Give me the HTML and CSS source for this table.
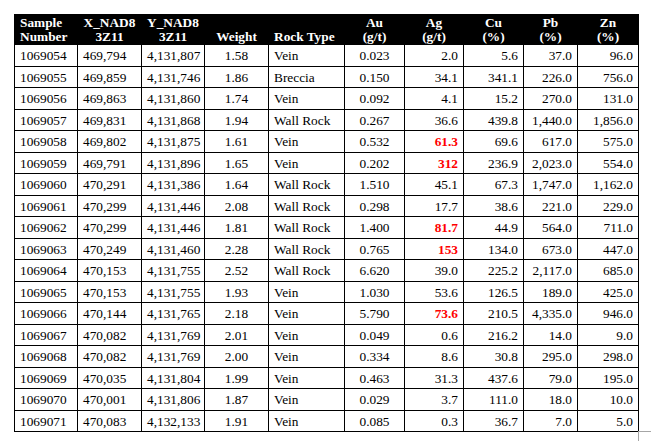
FILE: index.html
```html
<!DOCTYPE html>
<html>
<head>
<meta charset="utf-8">
<link rel="stylesheet" href="styles.css">
</head>
<body>
<div class="page">
<table class="assay">
<colgroup>
<col class="c1"><col class="c2"><col class="c3"><col class="c4"><col class="c5"><col class="c6"><col class="c7"><col class="c8"><col class="c9"><col class="c10">
</colgroup>
<thead>
<tr>
<th class="l">Sample<br>Number</th>
<th>X_NAD8<br>3Z11</th>
<th>Y_NAD8<br>3Z11</th>
<th class="b">Weight</th>
<th class="l b">Rock Type</th>
<th>Au<br>(g/t)</th>
<th>Ag<br>(g/t)</th>
<th>Cu<br>(%)</th>
<th>Pb<br>(%)</th>
<th>Zn<br>(%)</th>
</tr>
</thead>
<tbody>
<tr><td>1069054</td><td>469,794</td><td>4,131,807</td><td class="c">1.58</td><td>Vein</td><td class="c">0.023</td><td class="r">2.0</td><td class="r">5.6</td><td class="r">37.0</td><td class="r">96.0</td></tr>
<tr><td>1069055</td><td>469,859</td><td>4,131,746</td><td class="c">1.86</td><td>Breccia</td><td class="c">0.150</td><td class="r">34.1</td><td class="r">341.1</td><td class="r">226.0</td><td class="r">756.0</td></tr>
<tr><td>1069056</td><td>469,863</td><td>4,131,860</td><td class="c">1.74</td><td>Vein</td><td class="c">0.092</td><td class="r">4.1</td><td class="r">15.2</td><td class="r">270.0</td><td class="r">131.0</td></tr>
<tr><td>1069057</td><td>469,831</td><td>4,131,868</td><td class="c">1.94</td><td>Wall Rock</td><td class="c">0.267</td><td class="r">36.6</td><td class="r">439.8</td><td class="r">1,440.0</td><td class="r">1,856.0</td></tr>
<tr><td>1069058</td><td>469,802</td><td>4,131,875</td><td class="c">1.61</td><td>Vein</td><td class="c">0.532</td><td class="r hi">61.3</td><td class="r">69.6</td><td class="r">617.0</td><td class="r">575.0</td></tr>
<tr><td>1069059</td><td>469,791</td><td>4,131,896</td><td class="c">1.65</td><td>Vein</td><td class="c">0.202</td><td class="r hi">312</td><td class="r">236.9</td><td class="r">2,023.0</td><td class="r">554.0</td></tr>
<tr><td>1069060</td><td>470,291</td><td>4,131,386</td><td class="c">1.64</td><td>Wall Rock</td><td class="c">1.510</td><td class="r">45.1</td><td class="r">67.3</td><td class="r">1,747.0</td><td class="r">1,162.0</td></tr>
<tr><td>1069061</td><td>470,299</td><td>4,131,446</td><td class="c">2.08</td><td>Wall Rock</td><td class="c">0.298</td><td class="r">17.7</td><td class="r">38.6</td><td class="r">221.0</td><td class="r">229.0</td></tr>
<tr><td>1069062</td><td>470,299</td><td>4,131,446</td><td class="c">1.81</td><td>Wall Rock</td><td class="c">1.400</td><td class="r hi">81.7</td><td class="r">44.9</td><td class="r">564.0</td><td class="r">711.0</td></tr>
<tr><td>1069063</td><td>470,249</td><td>4,131,460</td><td class="c">2.28</td><td>Wall Rock</td><td class="c">0.765</td><td class="r hi">153</td><td class="r">134.0</td><td class="r">673.0</td><td class="r">447.0</td></tr>
<tr><td>1069064</td><td>470,153</td><td>4,131,755</td><td class="c">2.52</td><td>Wall Rock</td><td class="c">6.620</td><td class="r">39.0</td><td class="r">225.2</td><td class="r">2,117.0</td><td class="r">685.0</td></tr>
<tr><td>1069065</td><td>470,153</td><td>4,131,755</td><td class="c">1.93</td><td>Vein</td><td class="c">1.030</td><td class="r">53.6</td><td class="r">126.5</td><td class="r">189.0</td><td class="r">425.0</td></tr>
<tr><td>1069066</td><td>470,144</td><td>4,131,765</td><td class="c">2.18</td><td>Vein</td><td class="c">5.790</td><td class="r hi">73.6</td><td class="r">210.5</td><td class="r">4,335.0</td><td class="r">946.0</td></tr>
<tr><td>1069067</td><td>470,082</td><td>4,131,769</td><td class="c">2.01</td><td>Vein</td><td class="c">0.049</td><td class="r">0.6</td><td class="r">216.2</td><td class="r">14.0</td><td class="r">9.0</td></tr>
<tr><td>1069068</td><td>470,082</td><td>4,131,769</td><td class="c">2.00</td><td>Vein</td><td class="c">0.334</td><td class="r">8.6</td><td class="r">30.8</td><td class="r">295.0</td><td class="r">298.0</td></tr>
<tr><td>1069069</td><td>470,035</td><td>4,131,804</td><td class="c">1.99</td><td>Vein</td><td class="c">0.463</td><td class="r">31.3</td><td class="r">437.6</td><td class="r">79.0</td><td class="r">195.0</td></tr>
<tr><td>1069070</td><td>470,001</td><td>4,131,806</td><td class="c">1.87</td><td>Vein</td><td class="c">0.029</td><td class="r">3.7</td><td class="r">111.0</td><td class="r">18.0</td><td class="r">10.0</td></tr>
<tr><td>1069071</td><td>470,083</td><td>4,132,133</td><td class="c">1.91</td><td>Vein</td><td class="c">0.085</td><td class="r">0.3</td><td class="r">36.7</td><td class="r">7.0</td><td class="r">5.0</td></tr>
</tbody>
</table>
<div class="mark"></div>
</div>
</body>
</html>
```
FILE: styles.css
```css
html, body {
  margin: 0;
  padding: 0;
  background: #ffffff;
}
.page {
  position: relative;
  width: 651px;
  height: 441px;
  padding: 14px 0 0 14px;
  box-sizing: border-box;
  font-family: "Liberation Serif", "Times New Roman", serif;
  font-size: 13.33px;
  color: #000;
}
.assay {
  border-collapse: collapse;
  table-layout: fixed;
  width: 625px;
}
.c1 { width: 63px; }
.c2 { width: 64px; }
.c3 { width: 63px; }
.c4 { width: 64px; }
.c5 { width: 76px; }
.c6 { width: 60px; }
.c7 { width: 59px; }
.c8 { width: 60px; }
.c9 { width: 54px; }
.c10 { width: 61px; }
.assay th {
  background: #000;
  color: #fff;
  font-weight: bold;
  line-height: 14px;
  height: 29px;
  padding: 0 5px 0 5px;
  text-align: center;
  vertical-align: bottom;
  border: 1px solid #000;
  white-space: nowrap;
}
.assay th.l { text-align: left; }
.assay td {
  border: 1px solid #000;
  height: 21.5px;
  padding: 1px 5px 0 5px;
  line-height: 15px;
  vertical-align: middle;
  white-space: nowrap;
  box-sizing: border-box;
}
.assay td.c { text-align: center; }
.assay td.r { text-align: right; }
.assay td.hi {
  color: #ff0000;
  font-weight: bold;
}
.mark {
  position: absolute;
  left: 638px;
  top: 431px;
  width: 13px;
  height: 10px;
  border-left: 1px solid #a6a6a6;
  border-top: 1px solid #a6a6a6;
}
```
